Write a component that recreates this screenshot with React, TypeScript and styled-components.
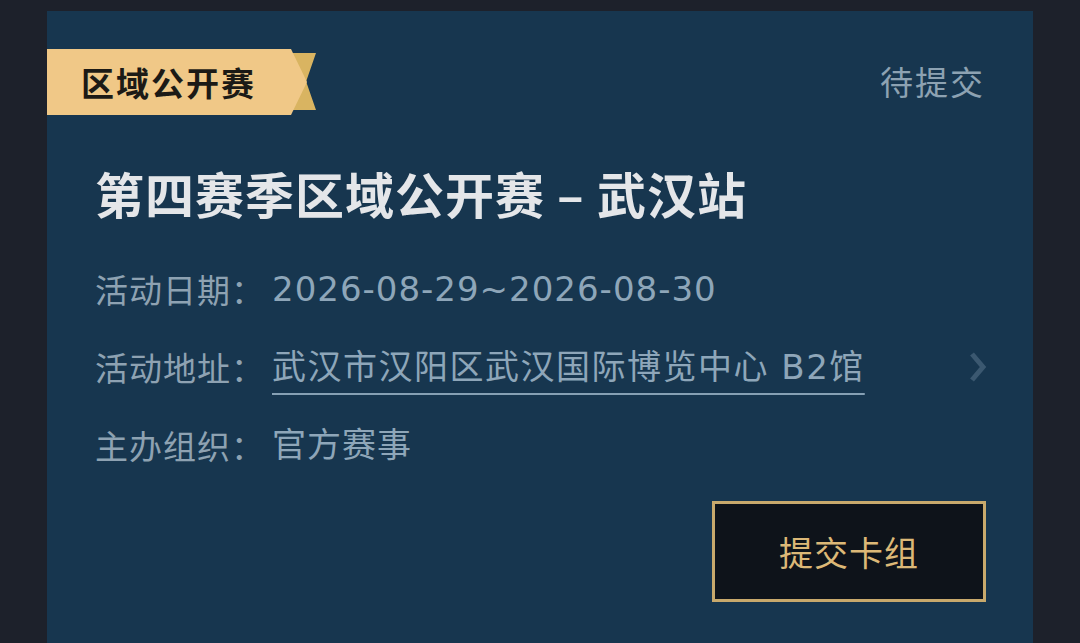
import React from "react";
import styled, { createGlobalStyle } from "styled-components";

const CJK = `"Noto Sans CJK SC", "Noto Sans", sans-serif`;
const LATIN_FIRST = `"DejaVu Sans", "Noto Sans CJK SC", sans-serif`;

const GlobalStyle = createGlobalStyle`
  html, body {
    margin: 0;
    padding: 0;
    background: #1d212b;
  }
  body {
    font-family: ${CJK};
  }
`;

interface IInfoRow {
  label: string;
  value: string;
  link?: boolean;
}

const rows: IInfoRow[] = [
  { label: "活动日期：", value: "2026-08-29~2026-08-30" },
  { label: "活动地址：", value: "武汉市汉阳区武汉国际博览中心 B2馆", link: true },
  { label: "主办组织：", value: "官方赛事" },
];

const ChevronIcon = () => (
  <svg width="18" height="30" viewBox="0 0 18 30" fill="none">
    <polyline
      points="3,2 14,15 3,28"
      stroke="#3b5870"
      strokeWidth="5"
      strokeLinejoin="miter"
    />
  </svg>
);

export default function App() {
  return (
    <>
      <GlobalStyle />
      <Page>
        <Card>
          <Header>
            <Tag>
              <TagBody>区域公开赛</TagBody>
            </Tag>
            <Status>待提交</Status>
          </Header>
          <Body>
            <Title>第四赛季区域公开赛 – 武汉站</Title>
            <InfoList>
              {rows.map(({ label, value, link }) => (
                <Row key={label}>
                  <Label>{label}</Label>
                  <Value link={link}>{value}</Value>
                  {link ? (
                    <ChevronWrap>
                      <ChevronIcon />
                    </ChevronWrap>
                  ) : null}
                </Row>
              ))}
            </InfoList>
            <Footer>
              <SubmitButton>提交卡组</SubmitButton>
            </Footer>
          </Body>
        </Card>
      </Page>
    </>
  );
}

const Page = styled.div`
  width: 1080px;
  height: 643px;
  box-sizing: border-box;
  padding: 11px 47px 0 47px;
  overflow: hidden;
  display: flex;
`;

const Card = styled.div`
  flex: 1;
  background: #17364f;
  display: flex;
  flex-direction: column;
  min-height: 700px;
`;

const Header = styled.div`
  display: flex;
  align-items: center;
  justify-content: space-between;
  margin-top: 38px;
  padding-right: 48px;
`;

const Tag = styled.div`
  position: relative;
  width: 269px;
  height: 66px;

  &::before {
    content: "";
    position: absolute;
    left: 243px;
    top: 4px;
    width: 26px;
    height: 57px;
    background: #d9b461;
    clip-path: polygon(0 0, 100% 0, 62% 50%, 100% 100%, 0 100%);
  }
`;

const TagBody = styled.div`
  position: relative;
  z-index: 1;
  width: 260px;
  height: 66px;
  box-sizing: border-box;
  padding-left: 34px;
  display: flex;
  align-items: center;
  background: #f0c887;
  clip-path: polygon(0 0, 244px 0, 260px 50%, 244px 100%, 0 100%);
  color: #1c1a16;
  font-size: 33px;
  font-weight: 700;
  letter-spacing: 2px;
`;

const Status = styled.div`
  color: #8da2b2;
  font-size: 33px;
  letter-spacing: 2px;
  line-height: 1.2;
`;

const Body = styled.div`
  display: flex;
  flex-direction: column;
  padding: 0 47px 0 48px;
`;

const Title = styled.div`
  margin-top: 48px;
  color: #e4e6e9;
  font-size: 49px;
  font-weight: 700;
  line-height: 60px;
  letter-spacing: 1px;
  white-space: nowrap;
`;

const InfoList = styled.div`
  display: flex;
  flex-direction: column;
  margin-top: 27px;
`;

const Row = styled.div`
  display: flex;
  align-items: center;
  height: 78px;
`;

const Label = styled.span`
  color: #8ea2b2;
  font-size: 33px;
  letter-spacing: 1px;
  line-height: 40px;
  margin-right: 7px;
  white-space: nowrap;
`;

interface IValue {
  link?: boolean;
}

const Value = styled.span<IValue>`
  color: #8ea6b9;
  font-family: ${LATIN_FIRST};
  font-size: 34px;
  letter-spacing: ${(props) => (props.link ? "1.5px" : "1px")};
  line-height: 40px;
  white-space: nowrap;
  text-decoration: ${(props) => (props.link ? "underline" : "none")};
  text-decoration-color: #86a0b4;
  text-decoration-thickness: 2px;
  text-underline-offset: 14px;
`;

const ChevronWrap = styled.span`
  margin-left: auto;
  display: flex;
  align-items: center;
  margin-right: -1px;
`;

const Footer = styled.div`
  display: flex;
  justify-content: flex-end;
  margin-top: 17px;
`;

const SubmitButton = styled.button`
  width: 274px;
  height: 101px;
  box-sizing: border-box;
  border: 3px solid #c8a96c;
  background: #0e131a;
  color: #dcb877;
  font-family: ${CJK};
  font-size: 34px;
  letter-spacing: 1px;
  cursor: pointer;
  padding: 0;
`;
